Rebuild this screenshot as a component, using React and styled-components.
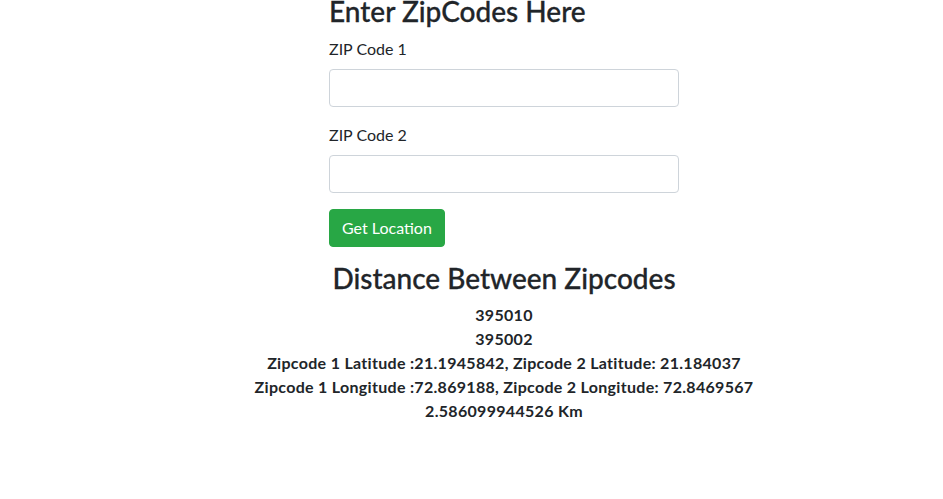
import React from "react";
import styled, { createGlobalStyle } from "styled-components";

const GlobalStyle = createGlobalStyle`
  html, body { margin: 0; padding: 0; background: #fff; }
  body {
    font-family: "Lato", "Open Sans", sans-serif;
    font-size: 16px;
    line-height: 1.5;
    color: #212529;
  }
  * { box-sizing: border-box; }
`;

const Page = styled.div`
  display: flex;
  flex-direction: column;
  align-items: center;
  padding-left: 65px;
  margin-top: -5px;
`;

const FormCard = styled.form`
  width: 350px;
  display: flex;
  flex-direction: column;
  margin-bottom: 15px;
`;

const Title = styled.h3`
  margin: 0 0 8px;
  font-size: 28px;
  font-weight: 500;
  line-height: 1.2;
  color: #212529;
  -webkit-text-stroke: 0.3px #212529;
`;

const FieldGroup = styled.div`
  display: flex;
  flex-direction: column;
  margin-bottom: 16px;
`;

const Label = styled.label`
  display: block;
  margin-bottom: 8px;
  font-size: 16px;
  line-height: 24px;
`;

const Input = styled.input`
  display: block;
  width: 100%;
  height: 38px;
  padding: 6px 12px;
  font-family: inherit;
  font-size: 16px;
  line-height: 24px;
  color: #495057;
  background: #fff;
  border: 1px solid #ced4da;
  border-radius: 4px;
  outline: none;
`;

const SubmitButton = styled.button`
  align-self: flex-start;
  padding: 6px 12px;
  font-family: inherit;
  font-size: 16px;
  line-height: 24px;
  color: #fff;
  background: #28a745;
  border: 1px solid #28a745;
  border-radius: 4px;
  cursor: pointer;
`;

const Results = styled.div`
  display: flex;
  flex-direction: column;
  align-items: center;
  text-align: center;
`;

const ResultTitle = styled.h2`
  margin: 0 0 8px;
  font-size: 28px;
  font-weight: 500;
  line-height: 1.2;
  -webkit-text-stroke: 0.3px #212529;
`;

const ResultLine = styled.div`
  font-weight: 700;
  font-size: 16px;
  line-height: 24px;
  letter-spacing: 0.3px;
  white-space: nowrap;
`;

const lines = [
  "395010",
  "395002",
  "Zipcode 1 Latitude :21.1945842, Zipcode 2 Latitude: 21.184037",
  "Zipcode 1 Longitude :72.869188, Zipcode 2 Longitude: 72.8469567",
  "2.586099944526 Km",
];

export default function App() {
  return (
    <>
      <GlobalStyle />
      <Page>
        <FormCard onSubmit={(e) => e.preventDefault()}>
          <Title>Enter ZipCodes Here</Title>
          <FieldGroup>
            <Label htmlFor="zip1">ZIP Code 1</Label>
            <Input id="zip1" type="text" />
          </FieldGroup>
          <FieldGroup>
            <Label htmlFor="zip2">ZIP Code 2</Label>
            <Input id="zip2" type="text" />
          </FieldGroup>
          <SubmitButton type="submit">Get Location</SubmitButton>
        </FormCard>
        <Results>
          <ResultTitle>Distance Between Zipcodes</ResultTitle>
          {lines.map((l) => (
            <ResultLine key={l}>{l}</ResultLine>
          ))}
        </Results>
      </Page>
    </>
  );
}
